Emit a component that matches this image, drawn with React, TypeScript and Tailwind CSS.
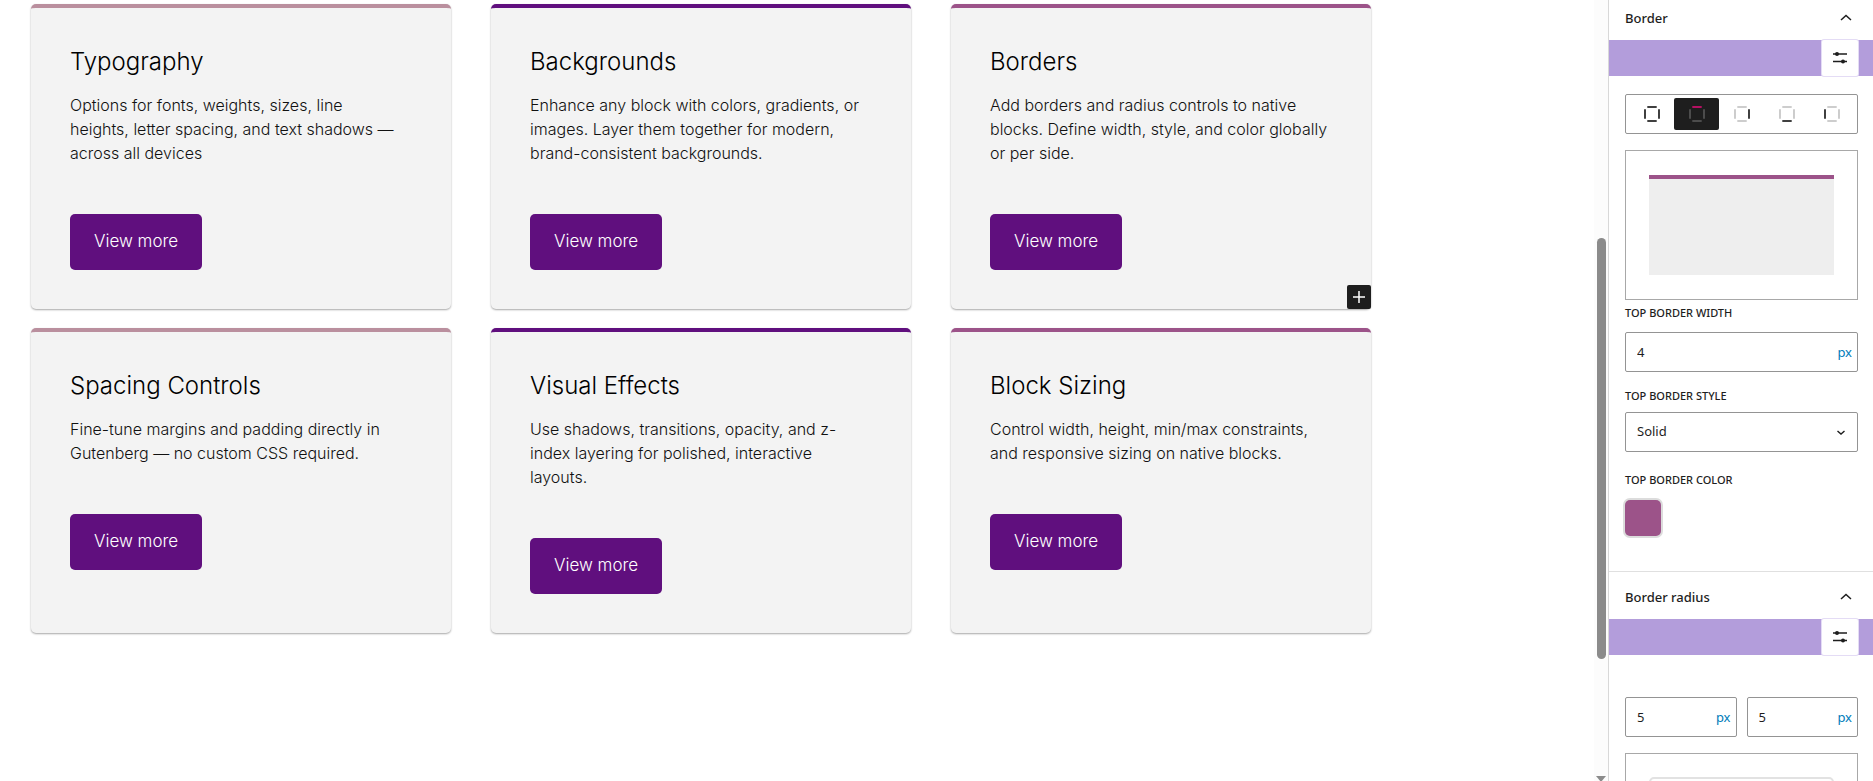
import React, { useState } from 'react';

interface Feature {
  title: string;
  text: string;
  accent: string;
}

const features: Feature[] = [
  {
    title: 'Typography',
    text: 'Options for fonts, weights, sizes, line\nheights, letter spacing, and text shadows — across all devices',
    accent: 'border-[#ba8f9e]',
  },
  {
    title: 'Backgrounds',
    text: 'Enhance any block with colors, gradients, or images. Layer them together for modern, brand-consistent backgrounds.',
    accent: 'border-[#600f7e]',
  },
  {
    title: 'Borders',
    text: 'Add borders and radius controls to native blocks. Define width, style, and color globally or per side.',
    accent: 'border-[#9c5389]',
  },
  {
    title: 'Spacing Controls',
    text: 'Fine-tune margins and padding directly in Gutenberg — no custom CSS required.',
    accent: 'border-[#ba8f9e]',
  },
  {
    title: 'Visual Effects',
    text: 'Use shadows, transitions, opacity, and z-index layering for polished, interactive layouts.',
    accent: 'border-[#600f7e]',
  },
  {
    title: 'Block Sizing',
    text: 'Control width, height, min/max constraints, and responsive sizing on native blocks.',
    accent: 'border-[#9c5389]',
  },
];

const sides = ['all', 'top', 'right', 'bottom', 'left'] as const;
type Side = (typeof sides)[number];

const FeatureCard: React.FC<{ feature: Feature; inserter: boolean }> = ({ feature, inserter }) => (
  <article
    className={`relative flex flex-col items-start rounded-[5px] border-t-4 bg-[#f3f3f3] p-[39px] shadow-[0_1px_2px_rgba(0,0,0,0.35)] ${feature.accent}`}
  >
    <h3 className="text-2xl leading-[30px] font-light text-black">{feature.title}</h3>
    <p className="mt-4 text-base leading-6 font-light whitespace-pre-line text-[#111]">{feature.text}</p>
    <a
      href="#"
      className="mt-[49px] flex h-14 items-center rounded-[5px] bg-[#600f7e] px-6 text-[17px] font-light text-white"
    >
      View more
    </a>
    {inserter && (
      <button
        type="button"
        aria-label="Add block"
        className="absolute right-0 bottom-0 flex size-6 items-center justify-center rounded-xs bg-[#1e1e1e] text-white"
      >
        <svg width="24" height="24" viewBox="0 0 24 24" fill="none" stroke="currentColor" strokeWidth="1.5">
          <path d="M6 12h12M12 6v12" />
        </svg>
      </button>
    )}
  </article>
);

// Four-sided outline with the given side emphasised
const SideIcon: React.FC<{ side: Side; active: boolean }> = ({ side, active }) => {
  const color = (s: Side) => {
    if (side !== 'all' && side !== s) return active ? '#555' : '#c4c4c4';
    return active ? '#d10f6f' : '#1e1e1e';
  };
  return (
    <svg width="16" height="16" viewBox="0 0 16 16" fill="none" strokeWidth="1.7">
      <path d="M3.300 1h9.400" stroke={color('top')} />
      <path d="M15 3.300v9.400" stroke={color('right')} />
      <path d="M3.300 15h9.400" stroke={color('bottom')} />
      <path d="M1 3.300v9.400" stroke={color('left')} />
    </svg>
  );
};

const PanelHeader: React.FC<{ title: string; className: string }> = ({ title, className }) => (
  <>
    <h2 className={className}>
      <button
        type="button"
        aria-expanded="true"
        className="flex w-full items-center justify-between pr-[21px] pl-4 text-[13px] leading-5 font-medium text-[#1e1e1e]"
      >
        {title}
        <svg width="12" height="8" viewBox="0 0 12 8" fill="none" stroke="#1e1e1e" strokeWidth="1.5">
          <path d="M1 6 6 1.500 11 6" />
        </svg>
      </button>
    </h2>
    <div className="flex h-9 justify-end bg-[#b39ddb] pr-[15px]">
      <button
        type="button"
        aria-label={`${title} settings`}
        className="flex size-9 items-center justify-center rounded-xs bg-white ring-1 ring-[#e4dcf5]"
      >
        <svg width="14" height="12" viewBox="0 0 14 12" stroke="#1e1e1e" strokeWidth="1.5">
          <path d="M0 2h14M0 9.500h14" />
          <circle cx="4" cy="2" r="2" fill="#1e1e1e" stroke="none" />
          <circle cx="10" cy="9.500" r="2" fill="#1e1e1e" stroke="none" />
        </svg>
      </button>
    </div>
  </>
);

const UnitField: React.FC<{ id: string; label?: string; initial: string }> = ({ id, label, initial }) => {
  const [value, setValue] = useState(initial);
  return (
    <div className="flex h-10 min-w-0 flex-1 items-center rounded-xs border border-[#949494] bg-white pt-0.5 pr-[5px] pl-[11px]">
      <input
        id={id}
        aria-label={label}
        value={value}
        onChange={(e) => setValue(e.target.value)}
        className="w-full min-w-0 flex-1 text-[13px] text-[#1e1e1e] outline-none"
      />
      <button type="button" className="text-[13px] text-[#007cba]">
        px
      </button>
    </div>
  );
};

const App: React.FC = () => {
  const [side, setSide] = useState<Side>('top');

  return (
    <div className="flex h-screen overflow-hidden bg-white">
      <main className="min-w-0 flex-1 pt-1 pl-[31px] font-['Inter',sans-serif]">
        <div className="grid max-w-[1340px] grid-cols-3 gap-x-10 gap-y-[19px]">
          {features.map((feature) => (
            <FeatureCard key={feature.title} feature={feature} inserter={feature.title === 'Borders'} />
          ))}
        </div>
      </main>

      {/* Canvas scrollbar */}
      <div className="flex w-3.5 flex-col items-center bg-[#fcfcfc]" aria-hidden="true">
        <div className="flex-[238]" />
        <div className="w-[9px] flex-[421] rounded-full bg-[#8b8b8b]" />
        <div className="flex-[117]" />
        <svg width="10" height="5" viewBox="0 0 10 5" fill="#8b8b8b">
          <path d="M0 0h10L5 6z" />
        </svg>
      </div>

      <aside className="w-[265px] shrink-0 border-l border-[#d8d8d8] font-['Noto_Sans',sans-serif]">
        <section className="border-b border-[#e0e0e0] pb-[35px]">
          <PanelHeader title="Border" className="pt-2 pb-3" />
          <div className="pt-[18px] pr-[15px] pl-4">
            <div className="flex h-10 rounded-xs border border-[#949494] p-[3px]" role="group" aria-label="Border side">
              {sides.map((s) => (
                <button
                  key={s}
                  type="button"
                  aria-label={s}
                  aria-pressed={side === s}
                  onClick={() => setSide(s)}
                  className={`flex flex-1 items-center justify-center rounded-xs ${side === s ? 'bg-[#1e1e1e]' : ''}`}
                >
                  <SideIcon side={s} active={side === s} />
                </button>
              ))}
            </div>

            <div className="mt-4 h-[150px] border border-[#a8a8a8] px-[23px] py-6">
              <div className="h-full border-t-4 border-[#9c5389] bg-[#eee]" />
            </div>

            <label htmlFor="border-width" className="mt-[3px] block text-[11px] leading-5 font-medium text-[#1e1e1e] uppercase">
              Top border width
            </label>
            <div className="mt-[9px] flex">
              <UnitField id="border-width" initial="4" />
            </div>

            <label htmlFor="border-style" className="mt-[14px] block text-[11px] leading-5 font-medium text-[#1e1e1e] uppercase">
              Top border style
            </label>
            <div className="relative mt-1.5">
              <select
                id="border-style"
                defaultValue="Solid"
                className="h-10 w-full appearance-none rounded-xs border border-[#949494] bg-white px-[11px] text-[13px] text-[#1e1e1e]"
              >
                <option>Solid</option>
                <option>Dashed</option>
                <option>Dotted</option>
              </select>
              <svg
                className="pointer-events-none absolute top-4 right-3"
                width="10"
                height="8"
                viewBox="0 0 10 8"
                fill="none"
                stroke="#1e1e1e"
                strokeWidth="1.4"
              >
                <path d="M1.500 3 5 6l3.500-3" />
              </svg>
            </div>

            <h3 className="mt-[18px] text-[11px] leading-5 font-medium text-[#1e1e1e] uppercase">Top border color</h3>
            <button
              type="button"
              aria-label="Top border color"
              className="mt-[10px] block size-9 rounded-[5px] bg-[#9c5389] ring-2 ring-[#dcdcdc]"
            />
          </div>
        </section>

        <section>
          <PanelHeader title="Border radius" className="pt-[15px] pb-3" />
          <div className="pt-[42px] pr-[15px] pl-4">
            <div className="flex gap-[10px]">
              <UnitField id="radius-top-left" label="Top left radius" initial="5" />
              <UnitField id="radius-top-right" label="Top right radius" initial="5" />
            </div>
            <div className="mt-4 h-[150px] border border-[#a8a8a8] p-[23px]">
              <div className="h-full rounded-[5px] border-2 border-[#e2e2e2]" />
            </div>
          </div>
        </section>
      </aside>
    </div>
  );
};

export default App;
